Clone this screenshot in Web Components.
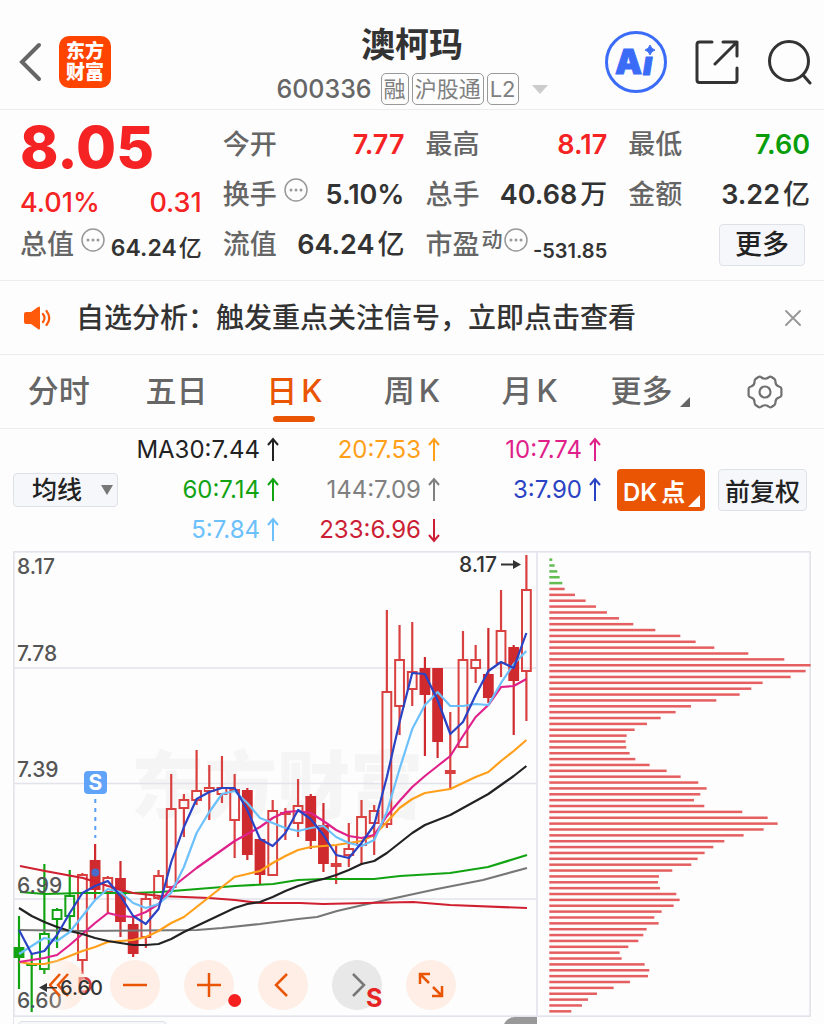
<!DOCTYPE html>
<html lang="zh-CN">
<head>
<meta charset="utf-8">
<meta name="viewport" content="width=device-width, initial-scale=1">
<title>澳柯玛 600336</title>
<style>
  html, body { margin: 0; height: 100%; }
  body {
    background: #fdfdfd;
    color: #333;
    font-family: Inter, "Noto Sans CJK SC", sans-serif;
    font-weight: 500;
    --line: #ececee;
    --accent: #ea5504;
    --up: #f52323;
    --down: #0a9d0a;
    --muted: #666;
  }
</style>
</head>
<body>
<stock-page></stock-page>

<script>
const define = (name, html, setup) => {
  const template = document.createElement('template');
  template.innerHTML = html;
  customElements.define(name, class extends HTMLElement {
    constructor() {
      super();
      this.attachShadow({ mode: 'open' }).append(template.content.cloneNode(true));
    }
    connectedCallback() {
      if (setup && !this.ready) { this.ready = true; setup(this, this.shadowRoot); }
    }
  });
};

const reset = `
  *, *::before, *::after { box-sizing: border-box; }
  button { font: inherit; color: inherit; background: none; border: 0; padding: 0; margin: 0; display: block; cursor: pointer; }
  svg { display: block; }
`;

/* ---------- header ---------- */
define('brand-logo', `
  <style>
    :host { display: grid; place-content: center; width: 52px; height: 52px; border-radius: 10px;
      background: #ff4400; color: #fff; font-size: 19px; line-height: 21px; font-weight: 900; }
    span { display: block; }
  </style>
  <span>东方</span><span>财富</span>
`);

define('market-tag', `
  <style>
    :host { display: block; border: 1px solid #999; border-radius: 5px; padding: 0 2px;
      font-size: 22px; line-height: 30px; font-weight: 400; color: #808080; }
  </style>
  <slot></slot>
`);

define('stock-header', `
  <style>${reset}
    :host { display: block; border-bottom: 1px solid var(--line); }
    header { display: grid; grid-template-columns: 1fr auto 1fr; align-items: center; height: 109px; padding: 0 11px; }
    .left { display: flex; align-items: center; gap: 16px; padding: 15px 0 0 8px; }
    .right { display: flex; align-items: center; justify-content: flex-end; gap: 28px; padding-top: 15px; }
    .title { display: grid; justify-items: center; padding-top: 19px; }
    h1 { margin: 0; font-size: 34px; line-height: 50px; font-weight: 600; }
    .sub { display: flex; align-items: center; gap: 3px; height: 38px; color: var(--muted); }
    .code { font-size: 25px; padding-right: 6px; }
    .caret { margin-left: 10px; }
  </style>
  <header>
    <div class="left">
      <button aria-label="返回"><svg width="24" height="40" viewBox="0 0 24 40" fill="none" stroke="#666" stroke-width="4" stroke-linecap="round"><path d="M20 3 3 20 20 37"/></svg></button>
      <brand-logo></brand-logo>
    </div>
    <div class="title">
      <h1>澳柯玛</h1>
      <div class="sub">
        <span class="code">600336</span>
        <market-tag>融</market-tag><market-tag>沪股通</market-tag><market-tag>L2</market-tag>
        <svg class="caret" width="16" height="9" viewBox="0 0 16 9"><path d="M0 0h16L8 9z" fill="#ccc"/></svg>
      </div>
    </div>
    <div class="right">
      <button aria-label="AI 助手"><svg width="62" height="62" viewBox="0 0 62 62">
        <circle cx="31" cy="31" r="29.5" fill="none" stroke="#3a6cf8" stroke-width="3"/>
        <g fill="#3a6cf8" stroke="#3a6cf8" stroke-linejoin="round" font-family="Inter, sans-serif" font-weight="900">
          <text x="10" y="43" font-size="34">A</text><text x="38" y="44" font-size="32" font-style="italic">ı</text>
          <path d="M45 14q1 4 5 5q-4 1-5 5q-1-4-5-5q4-1 5-5z"/>
        </g></svg></button>
      <button aria-label="分享"><svg width="44" height="44" viewBox="0 0 44 44" fill="none" stroke="#333" stroke-width="3" stroke-linecap="round" stroke-linejoin="round">
        <path d="M17 2H4.500Q2 2 2 4.500V40Q2 42.500 4.500 42.500H39.500Q42 42.500 42 40V28M28 2H42V16M42 2 20 24"/></svg></button>
      <button aria-label="搜索"><svg width="46" height="46" viewBox="0 0 46 46" fill="none" stroke="#333" stroke-width="3" stroke-linecap="round">
        <circle cx="22" cy="22" r="19.500"/><path d="m36 36 7 8"/></svg></button>
    </div>
  </header>
`);

/* ---------- quote ---------- */
define('quote-field', `
  <style>${reset}
    :host { display: flex; align-items: center; justify-content: space-between; height: 50px;
      font-size: 27px; line-height: 36px; white-space: nowrap; }
    .label { display: flex; align-items: center; color: var(--muted); }
    .note { font-size: 21px; line-height: 21px; margin: 0 0 12px 2px; }
    .info { margin: 0 0 10px 7px; }
    .note:not([hidden]) + .info { margin-left: 1px; }
    .value { display: flex; gap: 3px; font-weight: 600; }
    .unit { font-weight: 500; }
    :host([tone=up]) .value { color: var(--up); }
    :host([tone=down]) .value { color: var(--down); }
    :host([size=mid]) .value { font-size: 23px; padding-top: 6px; gap: 2px; }
    :host([size=small]) .value { font-size: 20px; padding-top: 12px; }
    [hidden] { display: none; }
  </style>
  <span class="label"><span class="name"></span><span class="note" hidden></span>
    <button class="info" aria-label="说明" hidden><svg width="24" height="24" viewBox="0 0 24 24" fill="#999">
      <circle cx="12" cy="12" r="11" fill="none" stroke="#999" stroke-width="1.500"/>
      <circle cx="7" cy="12" r="1.500"/><circle cx="12" cy="12" r="1.500"/><circle cx="17" cy="12" r="1.500"/></svg></button>
  </span>
  <span class="value"><slot></slot><span class="unit" hidden></span></span>
`, (host, root) => {
  root.querySelector('.name').textContent = host.getAttribute('label');
  for (const part of ['note', 'unit']) {
    const el = root.querySelector('.' + part);
    if (host.hasAttribute(part)) { el.hidden = false; el.textContent = host.getAttribute(part); }
  }
  root.querySelector('.info').hidden = !host.hasAttribute('info');
});

define('quote-panel', `
  <style>${reset}
    :host { display: block; border-bottom: 1px solid var(--line); }
    section { display: grid; grid-template-columns: repeat(4, 1fr); column-gap: 21px; padding: 10px 14px 10px 20px; }
    .price { height: 50px; color: var(--up); font-size: 58px; line-height: 54px; font-weight: 800; }
    .change { display: flex; justify-content: space-between; align-items: center; height: 50px; padding-top: 15px;
      color: var(--up); font-size: 27px; line-height: 34px; }
    .more { justify-self: end; align-self: center; margin-right: 5px; width: 86px; height: 42px;
      border: 1px solid #dfe1e8; border-radius: 4px; background: #f5f7fa; font-size: 27px; line-height: 36px; color: #222; }
  </style>
  <section>
    <div class="price">8.05</div>
    <quote-field label="今开" tone="up">7.77</quote-field>
    <quote-field label="最高" tone="up">8.17</quote-field>
    <quote-field label="最低" tone="down">7.60</quote-field>
    <div class="change"><span>4.01%</span><span>0.31</span></div>
    <quote-field label="换手" info>5.10%</quote-field>
    <quote-field label="总手" unit="万">40.68</quote-field>
    <quote-field label="金额" unit="亿">3.22</quote-field>
    <quote-field label="总值" info size="mid" unit="亿">64.24</quote-field>
    <quote-field label="流值" unit="亿">64.24</quote-field>
    <quote-field label="市盈" note="动" info size="small">-531.85</quote-field>
    <button class="more">更多</button>
  </section>
`);

/* ---------- notice ---------- */
define('signal-notice', `
  <style>${reset}
    :host { display: flex; align-items: center; height: 73px; padding: 0 21px 0 24px; border-bottom: 1px solid var(--line); }
    a { flex: 1; display: flex; align-items: center; gap: 24px; color: inherit; text-decoration: none;
      font-size: 28px; line-height: 40px; white-space: nowrap; }
  </style>
  <a href="#signal">
    <svg width="28" height="24" viewBox="0 0 28 24">
      <path d="M2 6h5l7-5q2-1.500 2 1v20q0 2.500-2 1l-7-5H2q-2 0-2-2V8q0-2 2-2z" fill="#ff5a0a"/>
      <path d="M19 8q3 4 0 8M22.500 5q5.500 7 0 14" fill="none" stroke="#ff5a0a" stroke-width="2.200" stroke-linecap="round"/></svg>
    <span><slot></slot></span>
  </a>
  <button aria-label="关闭"><svg width="20" height="20" viewBox="0 0 20 20" stroke="#999" stroke-width="2" stroke-linecap="round"><path d="M3 3 17 17M17 3 3 17"/></svg></button>
`);

/* ---------- period tabs ---------- */
define('period-tab', `
  <style>${reset}
    :host { display: grid; justify-items: center; }
    button { position: relative; height: 73px; padding-bottom: 2px; font-size: 31px; line-height: 71px; color: var(--muted); white-space: nowrap; }
    :host([active]) button { color: var(--accent); }
    :host([active]) button::after { content: ""; position: absolute; left: 50%; bottom: 6px; width: 42px; height: 6px;
      margin-left: -21px; border-radius: 3px; background: var(--accent); }
    :host([menu]) button::after { content: ""; position: absolute; right: -18px; bottom: 21px;
      border: 5px solid; border-color: transparent var(--muted) var(--muted) transparent; }
  </style>
  <button><slot></slot></button>
`);

define('period-tabs', `
  <style>${reset}
    :host { display: block; border-bottom: 1px solid var(--line); }
    nav { display: grid; grid-template-columns: repeat(7, 1fr); align-items: center; }
    i { font-style: normal; margin-left: 4px; }
    .gear { justify-self: center; }
    .menu { padding-right: 12px; }
  </style>
  <nav>
    <period-tab>分时</period-tab><period-tab>五日</period-tab>
    <period-tab active>日<i>K</i></period-tab><period-tab>周<i>K</i></period-tab><period-tab>月<i>K</i></period-tab>
    <period-tab class="menu" menu>更多</period-tab>
    <button class="gear" aria-label="设置"><svg width="36" height="34" viewBox="0 0 36 34" fill="none" stroke="#707070" stroke-width="2.200" stroke-linejoin="round">
      <path d="M11.500 2Q13 1.200 14.500 2.500Q18 5 21.500 2.500Q23 1.200 24.500 2L27.500 4Q28.500 5 28.500 7Q28.500 10.500 32 11.500Q34 12 34.400 13.500V20.500Q34 22 32 22.500Q28.500 23.500 28.500 27Q28.500 29 27.500 30L24.500 32Q23 32.800 21.500 31.500Q18 29 14.500 31.500Q13 32.800 11.500 32L8.500 30Q7.500 29 7.500 27Q7.500 23.500 4 22.500Q2 22 1.600 20.500V13.500Q2 12 4 11.500Q7.500 10.500 7.500 7Q7.500 5 8.500 4Z"/>
      <circle cx="18" cy="17" r="5.500"/></svg></button>
  </nav>
`);

/* ---------- moving average legend ---------- */
define('ma-value', `
  <style>${reset}
    :host { display: flex; align-items: center; justify-content: flex-end; gap: 7px; height: 40px;
      font-size: 24px; line-height: 32px; font-weight: 400; white-space: nowrap; }
    :host([falling]) svg { transform: rotate(180deg); }
  </style>
  <span><slot></slot></span>
  <svg width="12" height="26" viewBox="0 0 12 26" fill="none" stroke="currentColor" stroke-width="2"><path d="M6 24V2M1 8 6 2 11 8"/></svg>
`);

define('ma-legend', `
  <style>${reset}
    :host { display: grid; grid-template-columns: 105px 1fr 88px 89px; align-items: center; padding: 1px 17px 1px 13px; }
    label { position: relative; display: block; }
    select { appearance: none; width: 100%; height: 34px; margin: 0; padding: 0 0 0 18px; border: 1px solid #dfe1e8; border-radius: 4px;
      background: #f5f7fa; color: #222; font: inherit; font-size: 25px; line-height: 32px; display: block; }
    label svg { position: absolute; right: 5px; top: 12px; }
    .values { display: grid; grid-template-columns: repeat(3, 1fr); margin-right: 16px; }
    .dk, .adj { height: 42px; border-radius: 4px; white-space: nowrap; }
    .dk { position: relative; background: var(--accent); color: #fff; font-size: 24px; font-weight: 600; text-align: left; padding-left: 6px; }
    .dk i { font-style: normal; margin-left: 4px; }
    .dk::after { content: ""; position: absolute; right: 5px; bottom: 4px; border: 6px solid; border-color: transparent #fff #fff transparent; }
    .adj { border: 1px solid #dfe1e8; background: #f5f7fa; color: #222; font-size: 25px; }
    .actions { display: flex; gap: 13px; grid-column: 3 / 5; }
    .actions .dk { flex: 0 0 88px; }
    .actions .adj { flex: 0 0 89px; }
    :host { grid-template-columns: 105px 1fr auto; }
    .actions { grid-column: auto; }
  </style>
  <label><select aria-label="指标"><option>均线</option><option>BOLL</option></select>
    <svg width="12" height="10" viewBox="0 0 12 10"><path d="M0 0h12L6 10z" fill="#777"/></svg></label>
  <div class="values">
    <ma-value style="color:#222">MA30:7.44</ma-value>
    <ma-value style="color:#ff9f1a">20:7.53</ma-value>
    <ma-value style="color:#e0218a">10:7.74</ma-value>
    <ma-value style="color:#12a312">60:7.14</ma-value>
    <ma-value style="color:#808080">144:7.09</ma-value>
    <ma-value style="color:#2a43c4">3:7.90</ma-value>
    <ma-value style="color:#6cc0fb">5:7.84</ma-value>
    <ma-value style="color:#cc1f36" falling>233:6.96</ma-value>
  </div>
  <div class="actions">
    <button class="dk">DK<i>点</i></button>
    <button class="adj">前复权</button>
  </div>
`);

/* ---------- candlestick chart with volume profile ---------- */
// [high, body top, body bottom, low, kind]; g = green, r = red, capital = solid
const CANDLES = [
  [916,948,957,989,'G'],[953,964,965,1012,'g'],[864,934,969,974,'g'],[908,910,919,948,'g'],[870,896,916,929,'g'],
  [873,875,960,974,'r'],[844,861,889,900,'R'],[876,878,892,913,'r'],[861,879,921,937,'R'],[917,925,953,957,'R'],
  [893,899,937,948,'r'],[870,876,898,900,'r'],[774,809,887,887,'r'],[794,800,808,837,'r'],[750,791,800,805,'r'],
  [765,788,791,820,'r'],[756,788,794,803,'r'],[774,790,820,858,'r'],[788,791,854,860,'R'],[840,840,874,884,'R'],
  [800,811,875,875,'r'],[808,813,814,840,'r'],[779,806,823,837,'r'],[794,797,840,849,'R'],[803,826,863,872,'R'],
  [846,864,866,884,'r'],[823,849,855,867,'r'],[800,817,845,865,'r'],[805,811,823,855,'r'],[610,692,824,828,'r'],
  [625,660,706,735,'r'],[622,672,689,706,'r'],[657,669,694,756,'R'],[669,669,741,758,'R'],[712,771,773,790,'r'],
  [631,660,747,747,'r'],[645,660,668,683,'r'],[628,675,697,703,'R'],[590,631,663,677,'r'],[645,648,680,735,'R'],
  [555,590,671,721,'r']];
const X0 = 19, STEP = 12.685;
const DAILY = {
  '#ff9f1a': [962,964,964,961,956,951,947,942,941,940,937,931,923,917,907,897,887,877,874,871,863,856,850,847,846,845,843,841,835,822,808,799,793,791,789,783,777,772,761,751,740],
  '#e0218a': [962,960,958,955,945,934,923,913,916,917,912,904,888,878,868,859,850,841,834,827,818,812,811,813,821,830,836,838,835,816,801,787,776,766,756,736,717,705,687,686,679],
  '#222': [908,916,922,927,931,934,938,941,943,945,945,944,939,932,926,920,914,908,904,902,897,891,886,882,879,875,870,864,861,853,843,833,825,820,815,808,801,794,785,776,766],
  '#6cc0fb': [954,946,938,941,932,916,900,889,892,903,908,904,893,867,833,812,794,791,803,818,823,828,831,828,826,837,843,846,840,812,769,729,705,692,706,706,704,705,683,664,651],
  '#2a43c4': [930,954,951,935,913,893,886,881,896,916,924,909,862,827,799,792,788,788,810,839,846,833,810,819,835,855,858,843,825,777,722,673,674,700,734,722,695,671,662,668,633]
};
const SLOW = {
  '#12a312': '20,892 45,894 83,893 133,893 160,892 185,890 235,886 273,884 298,880 324,879 374,879 400,876 450,873 488,867 527,855',
  '#777': '20,930 83,931 197,930 222,928 260,924 298,919 317,917 337,911 363,905 400,897 437,889 483,880 527,868',
  '#d02030': '20,866 45,871 83,878 108,886 133,893 160,896 209,898 235,900 260,903 300,903 323,904 367,903 413,902 450,905 527,908'
};
// bar lengths in thirds of a unit, top row first
const PROFILE = [9,16,24,31,39,46,77,109,140,173,209,252,318,393,439,495,597,705,784,769,724,640,606,571,501,425,379,334,293,256,232,229,231,241,258,301,352,394,447,
  472,453,434,465,579,655,685,643,583,525,492,466,445,426,369,329,326,332,381,391,373,337,315,328,292,282,267,237,211,217,286,300,296,242,193,143,116,98,66];

define('kline-chart', `
  <style>${reset}
    :host { position: relative; display: block; margin: 0 13px; }
    svg.plot { width: 100%; height: auto; }
    .tools { position: absolute; left: 23px; bottom: 7px; display: flex; gap: 24px; }
    .tools button { width: 50px; height: 50px; border-radius: 25px; background: rgba(255, 224, 207, .5); color: var(--accent); display: grid; place-items: center; }
    .tools button.off { background: rgba(222, 222, 222, .7); color: #777; }
    .tools button:first-child { background: linear-gradient(90deg, rgba(255, 224, 207, 0) 10%, rgba(255, 224, 207, .5) 70%); }
    .marks { position: absolute; inset: 0; width: 100%; height: auto; pointer-events: none; }
    .tools svg { fill: none; stroke: currentColor; stroke-width: 2.500; }
  </style>
  <svg class="plot" viewBox="13 551 798 466" font-family="Inter, sans-serif" font-size="21" font-weight="500">
    <text x="131" y="812" font-family="'Noto Sans CJK SC', sans-serif" font-size="73" font-weight="900" fill="#f5f5f6">东方财富</text>
    <g fill="none" stroke="#e2e3eb" stroke-width="1.600">
      <rect x="13.800" y="551.800" width="796.400" height="464.400"/>
      <path d="M537 552V1016M14 668H537M14 783.500H537M14 899H537"/>
    </g>
    <g id="candles"></g>
    <g id="lines" fill="none" stroke-width="2.200" stroke-linejoin="round"></g>
    <g id="profile"></g>
    <g fill="#555"><text x="17" y="574">8.17</text><text x="17" y="661">7.78</text><text x="17" y="777">7.39</text><text x="17" y="893">6.99</text><text x="17" y="1008">6.60</text></g>
    <g fill="#333"><text x="459" y="572">8.17</text>
      <path d="M501 563.500H513V560L521 564.500L513 569V565.500H501Z"/></g>
    <path d="M95.300 799V838" stroke="#5a9ff8" stroke-width="2" stroke-dasharray="4 5"/>
    <circle cx="95.300" cy="872.500" r="4" fill="#4a6bc8"/>
    <rect x="84" y="771" width="23" height="23" rx="4" fill="#62a3fa"/>
    <text x="95.500" y="790" text-anchor="middle" font-weight="700" fill="#fff">S</text>
    <text x="77" y="993" font-size="22" font-weight="600" fill="#d63a3a">D</text>
  </svg>
  <div class="tools">
    <button aria-label="最左"><svg width="24" height="24" viewBox="0 0 24 24"><path d="M11 1 1 12 11 23M19 1 9 12 19 23"/></svg></button>
    <button aria-label="缩小"><svg width="24" height="24" viewBox="0 0 24 24"><path d="M0 12H24"/></svg></button>
    <button aria-label="放大"><svg width="24" height="24" viewBox="0 0 24 24"><path d="M0 12H24M12 0V24"/></svg></button>
    <button aria-label="左移"><svg width="24" height="24" viewBox="0 0 24 24"><path d="M16 1 5 12 16 23"/></svg></button>
    <button class="off" aria-label="右移"><svg width="24" height="24" viewBox="0 0 24 24"><path d="M8 1 19 12 8 23"/></svg></button>
    <button aria-label="全屏"><svg width="26" height="26" viewBox="0 0 26 26"><path d="M2 12V2H12M2 2 11 11M14 24H24V14M24 24 15 15"/></svg></button>
  </div>
  <svg class="marks" viewBox="13 551 798 466" font-family="Inter, sans-serif">
    <path d="M57 987H47V983L39 987.500L47 992V988.500H57Z" fill="#333"/>
    <text x="60" y="995" font-size="20" font-weight="500" fill="#333">6.60</text>
    <circle cx="234.700" cy="1000.500" r="6.500" fill="#f52020"/>
    <text x="366" y="1007" font-size="25" font-weight="700" fill="#e62424">S</text>
  </svg>
`, (host, root) => {
  const red = '#d94141', solid = '#cf2b2f', green = '#12a312';
  root.getElementById('candles').innerHTML = CANDLES.map(([hi, top, bot, lo, kind], i) => {
    const x = X0 + i * STEP, isGreen = kind.toLowerCase() === 'g', full = kind < 'a';
    const c = isGreen ? green : full ? solid : red;
    const wick = `<path d="M${x} ${hi}V${top}M${x} ${bot}V${lo}" stroke="${c}" stroke-width="2.200"/>`;
    return wick + `<rect x="${x - 4.4}" y="${top}" width="8.800" height="${bot - top}" fill="${full ? c : 'none'}" stroke="${c}" stroke-width="2"/>`;
  }).join('');
  root.getElementById('lines').innerHTML =
    Object.entries(SLOW).map(([c, p]) => `<polyline points="${p}" stroke="${c}"/>`).join('') +
    Object.entries(DAILY).map(([c, ys]) => `<polyline points="${ys.map((y, i) => `${X0 + i * STEP},${y}`).join(' ')}" stroke="${c}"/>`).join('');
  root.getElementById('profile').innerHTML = PROFILE.map((n, i) =>
    `<rect x="549.300" y="${558.4 + i * 5.866}" width="${n / 3}" height="2.500" fill="${i < 5 ? '#63bd52' : '#e55f60'}"/>`).join('');
});

/* ---------- top edge of the next indicator pane ---------- */
define('indicator-pane', `
  <style>${reset}
    :host { display: flex; justify-content: space-between; align-items: flex-start; margin: 0 13px; border-left: 1px solid #e2e3eb; height: 60px; }
    .pick { width: 149px; height: 34px; margin: 4px 0 0 4px; border: 1px solid #dfe1e8; border-radius: 4px; background: #f5f7fa; }
    .drag { width: 34px; height: 34px; margin-right: 274px; border-radius: 12px 0 0 0; background: #999; }
  </style>
  <button class="pick" aria-label="选择指标"></button>
  <button class="drag" aria-label="展开"></button>
`);

define('stock-page', `
  <style>
    :host { display: flex; flex-direction: column; height: 100vh; overflow: hidden; }
    :host > * { flex: none; }
  </style>
  <stock-header></stock-header>
  <quote-panel></quote-panel>
  <signal-notice>自选分析：触发重点关注信号，立即点击查看</signal-notice>
  <period-tabs></period-tabs>
  <ma-legend></ma-legend>
  <kline-chart></kline-chart>
  <indicator-pane></indicator-pane>
`);
</script>
</body>
</html>
